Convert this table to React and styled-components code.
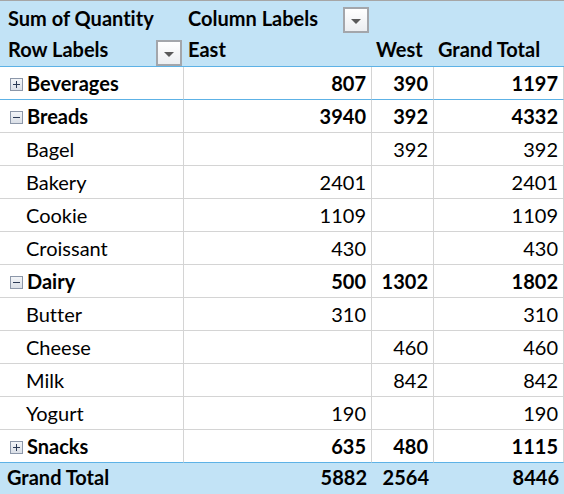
import React from "react";
import styled, { createGlobalStyle, css } from "styled-components";

const Global = createGlobalStyle`
  html, body { margin: 0; padding: 0; background: #ffffff; }
  body {
    font-family: Lato, "Open Sans", sans-serif;
    color: #000;
    font-variant-ligatures: none;
  }
`;

const HEADER_FILL = "#C2E3F6";
const BLUE_LINE = "#5DB2E6";
const GRID_LINE = "#D4D4D4";

const Sheet = styled.div`
  display: grid;
  grid-template-columns: 184px 188px 62px 130px;
  width: 564px;
  border-top: 1px solid #a6a6a6;
  overflow: hidden;
`;

const Cell = styled.div`
  box-sizing: border-box;
  display: flex;
  align-items: flex-start;
  height: 33px;
  padding: 4px 5px 0 5px;
  font-size: 20px;
  line-height: 1.2;
  white-space: nowrap;
  font-weight: ${(p) => (p.$bold ? 700 : 400)};
  justify-content: ${(p) => (p.$right ? "flex-end" : "flex-start")};
  border-bottom: 1px solid ${(p) => (p.$blue ? BLUE_LINE : GRID_LINE)};
  border-right: 1px solid ${GRID_LINE};
  ${(p) => p.$indent && css`padding-left: ${p.$indent}px;`}
`;

const HeadCell = styled.div`
  box-sizing: border-box;
  display: flex;
  align-items: flex-start;
  position: relative;
  height: ${(p) => p.$h}px;
  padding: ${(p) => p.$pt}px 5px 0 8px;
  font-size: 20px;
  line-height: 1.2;
  font-weight: 700;
  white-space: nowrap;
  background: ${HEADER_FILL};
  ${(p) => p.$line && css`border-bottom: 1px solid ${BLUE_LINE};`}
  ${(p) => p.$tight && css`padding-left: 4px;`}
`;

const TotalCell = styled.div`
  box-sizing: border-box;
  display: flex;
  align-items: flex-start;
  height: 33px;
  padding: 2px 5px 0 7px;
  font-size: 20px;
  line-height: 1.2;
  font-weight: 700;
  white-space: nowrap;
  background: ${HEADER_FILL};
  justify-content: ${(p) => (p.$right ? "flex-end" : "flex-start")};
`;

const DropButton = styled.div`
  position: absolute;
  right: ${(p) => p.$right}px;
  top: ${(p) => p.$top}px;
  box-sizing: border-box;
  width: 26px;
  height: 26px;
  border: 2px solid #a3a6ab;
  background: linear-gradient(#ffffff, #eceef1);
  display: flex;
  align-items: center;
  justify-content: center;
`;

const Triangle = styled.span`
  width: 0;
  height: 0;
  border-left: 5px solid transparent;
  border-right: 5px solid transparent;
  border-top: 5px solid #5a5a5a;
  margin-top: 2px;
`;

const ExpandBox = styled.svg`
  flex: none;
  width: 13px;
  height: 13px;
  margin: 7px 4px 0 0;
`;

function Toggle({ open }) {
  return (
    <ExpandBox viewBox="0 0 13 13">
      <defs>
        <linearGradient id="eb" x1="0" y1="0" x2="0" y2="1">
          <stop offset="0" stopColor="#f4f6f9" />
          <stop offset="1" stopColor="#d9dee6" />
        </linearGradient>
      </defs>
      <rect x="0.5" y="0.5" width="12" height="12" fill="url(#eb)" stroke="#8c97a9" />
      <line x1="3" y1="6.5" x2="10" y2="6.5" stroke="#2b3a55" strokeWidth="1" />
      {!open && <line x1="6.5" y1="3" x2="6.5" y2="10" stroke="#2b3a55" strokeWidth="1" />}
    </ExpandBox>
  );
}

const rows = [
  { label: "Beverages", group: true, open: false, e: 807, w: 390, t: 1197, blue: true },
  { label: "Breads", group: true, open: true, e: 3940, w: 392, t: 4332 },
  { label: "Bagel", w: 392, t: 392 },
  { label: "Bakery", e: 2401, t: 2401 },
  { label: "Cookie", e: 1109, t: 1109 },
  { label: "Croissant", e: 430, t: 430 },
  { label: "Dairy", group: true, open: true, e: 500, w: 1302, t: 1802 },
  { label: "Butter", e: 310, t: 310 },
  { label: "Cheese", w: 460, t: 460 },
  { label: "Milk", w: 842, t: 842 },
  { label: "Yogurt", e: 190, t: 190 },
  { label: "Snacks", group: true, open: false, e: 635, w: 480, t: 1115, blue: true },
];

export default function App() {
  return (
    <>
      <Global />
      <Sheet>
        <HeadCell $h={32} $pt={5}>Sum of Quantity</HeadCell>
        <HeadCell $h={32} $pt={5} $tight>
          Column Labels
          <DropButton $right={3} $top={6}><Triangle /></DropButton>
        </HeadCell>
        <HeadCell $h={32} $pt={5} />
        <HeadCell $h={32} $pt={5} />

        <HeadCell $h={34} $pt={4} $line>
          Row Labels
          <DropButton $right={2} $top={7}><Triangle /></DropButton>
        </HeadCell>
        <HeadCell $h={34} $pt={4} $line $tight>East</HeadCell>
        <HeadCell $h={34} $pt={4} $line $tight>West</HeadCell>
        <HeadCell $h={34} $pt={4} $line $tight>Grand Total</HeadCell>

        {rows.map((r) => (
          <React.Fragment key={r.label}>
            <Cell $bold={r.group} $blue={r.blue} $indent={r.group ? 10 : 26}>
              {r.group && <Toggle open={r.open} />}
              {r.label}
            </Cell>
            <Cell $bold={r.group} $blue={r.blue} $right>{r.e ?? ""}</Cell>
            <Cell $bold={r.group} $blue={r.blue} $right>{r.w ?? ""}</Cell>
            <Cell $bold={r.group} $blue={r.blue} $right>{r.t}</Cell>
          </React.Fragment>
        ))}

        <TotalCell>Grand Total</TotalCell>
        <TotalCell $right>5882</TotalCell>
        <TotalCell $right>2564</TotalCell>
        <TotalCell $right>8446</TotalCell>
      </Sheet>
    </>
  );
}
